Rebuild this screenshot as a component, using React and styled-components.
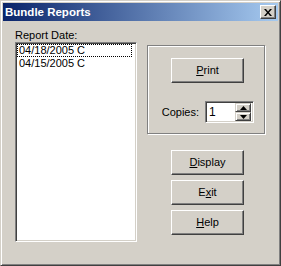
import React from 'react';
import styled, { createGlobalStyle } from 'styled-components';

const Global = createGlobalStyle`
  html, body { margin: 0; padding: 0; background: #d4d0c8; }
  body { font-family: "Liberation Sans", Arial, sans-serif; font-size: 11px; color: #000; }
`;

const Window = styled.div`
  width: 281px;
  height: 266px;
  box-sizing: border-box;
  background: #d4d0c8;
  border: 1px solid;
  border-color: #d4d0c8 #404040 #404040 #d4d0c8;
  box-shadow: inset 1px 1px 0 #fff, inset -1px -1px 0 #808080;
  padding: 2px;
  display: flex;
  flex-direction: column;
`;

const TitleBar = styled.div`
  height: 18px;
  flex: none;
  display: flex;
  align-items: center;
  justify-content: space-between;
  padding: 0 2px 0 2px;
  background: linear-gradient(to right, #0a246a, #a6caf0);
`;

const Title = styled.span`
  color: #fff;
  font-weight: bold;
  font-size: 11.5px;
  line-height: 14px;
  padding-left: 0;
`;

const CloseButton = styled.div`
  width: 16px;
  height: 14px;
  box-sizing: border-box;
  background: #d4d0c8;
  border: 1px solid;
  border-color: #fff #404040 #404040 #fff;
  box-shadow: inset -1px -1px 0 #808080;
  display: flex;
  align-items: center;
  justify-content: center;
`;

const Body = styled.div`
  flex: 1;
  display: flex;
  padding: 8px 0 0 12px;
`;

const LeftCol = styled.div`
  width: 122px;
  display: flex;
  flex-direction: column;
`;

const Label = styled.div`
  line-height: 13px;
  height: 13px;
  padding-left: 0;
`;

const ListBox = styled.div`
  height: 200px;
  box-sizing: border-box;
  background: #fff;
  border: 1px solid;
  border-color: #808080 #fff #fff #808080;
  box-shadow: inset 1px 1px 0 #404040, inset -1px -1px 0 #d4d0c8;
  padding: 1px 4px 1px 1px;
`;

const ListItem = styled.div`
  height: 13px;
  line-height: 13px;
  padding-left: 2px;
  box-sizing: border-box;
  outline: ${p => (p.$focused ? '1px dotted #000' : 'none')};
  outline-offset: -1px;
`;

const RightCol = styled.div`
  margin-left: 10px;
  display: flex;
  flex-direction: column;
`;

const Group = styled.div`
  margin-top: 16px;
  width: 118px;
  height: 89px;
  box-sizing: border-box;
  border: 1px solid #808080;
  box-shadow: inset 1px 1px 0 #fff, 1px 1px 0 #fff;
  padding: 12px 0 0 23px;
  display: flex;
  flex-direction: column;
`;

const Button = styled.div`
  width: 73px;
  height: 25px;
  box-sizing: border-box;
  border: 1px solid;
  border-color: #fff #404040 #404040 #fff;
  box-shadow: inset -1px -1px 0 #808080;
  display: flex;
  align-items: center;
  justify-content: center;
  line-height: 13px;
  margin-top: ${p => p.$gap || 0}px;
  u { text-decoration: underline; text-underline-offset: 1px; }
`;

const CopiesRow = styled.div`
  margin-top: 18px;
  margin-left: -23px;
  display: grid;
  grid-template-columns: 57px auto;
  align-items: center;
`;

const CopiesLabel = styled.span`
  text-align: right;
  padding-right: 6px;
`;

const SpinBox = styled.div`
  width: 49px;
  height: 22px;
  box-sizing: border-box;
  background: #fff;
  border: 1px solid;
  border-color: #808080 #fff #fff #808080;
  box-shadow: inset 1px 1px 0 #404040, inset -1px -1px 0 #d4d0c8;
  padding: 2px 2px 2px 3px;
  display: flex;
  align-items: center;
  justify-content: space-between;
`;

const SpinValue = styled.span`
  font-size: 12px;
  line-height: 14px;
`;

const SpinButtons = styled.div`
  display: flex;
  flex-direction: column;
  width: 16px;
  height: 18px;
`;

const SpinBtn = styled.div`
  flex: 1;
  box-sizing: border-box;
  background: #d4d0c8;
  border: 1px solid;
  border-color: #d4d0c8 #404040 #404040 #d4d0c8;
  box-shadow: inset 1px 1px 0 #fff, inset -1px -1px 0 #808080;
  display: flex;
  align-items: center;
  justify-content: center;
`;

const BottomButtons = styled.div`
  margin-top: 16px;
  margin-left: 24px;
  display: flex;
  flex-direction: column;
`;

const Arrow = ({ up }) => (
  <svg width="7" height="4" viewBox="0 0 7 4">
    <polygon points={up ? '3.5,0 7,4 0,4' : '0,0 7,0 3.5,4'} fill="#000" />
  </svg>
);

export default function App() {
  return (
    <>
      <Global />
      <Window>
        <TitleBar>
          <Title>Bundle Reports</Title>
          <CloseButton>
            <svg width="8" height="7" viewBox="0 0 8 7">
              <path d="M0 0 L2 0 L4 2.5 L6 0 L8 0 L5 3.5 L8 7 L6 7 L4 4.5 L2 7 L0 7 L3 3.5 Z" fill="#000" />
            </svg>
          </CloseButton>
        </TitleBar>
        <Body>
          <LeftCol>
            <Label>Report Date:</Label>
            <ListBox>
              <ListItem $focused>04/18/2005 C</ListItem>
              <ListItem>04/15/2005 C</ListItem>
            </ListBox>
          </LeftCol>
          <RightCol>
            <Group>
              <Button><span><u>P</u>rint</span></Button>
              <CopiesRow>
                <CopiesLabel>Copies:</CopiesLabel>
                <SpinBox>
                  <SpinValue>1</SpinValue>
                  <SpinButtons>
                    <SpinBtn><Arrow up /></SpinBtn>
                    <SpinBtn><Arrow /></SpinBtn>
                  </SpinButtons>
                </SpinBox>
              </CopiesRow>
            </Group>
            <BottomButtons>
              <Button><span><u>D</u>isplay</span></Button>
              <Button $gap={5}><span>E<u>x</u>it</span></Button>
              <Button $gap={5}><span><u>H</u>elp</span></Button>
            </BottomButtons>
          </RightCol>
        </Body>
      </Window>
    </>
  );
}
